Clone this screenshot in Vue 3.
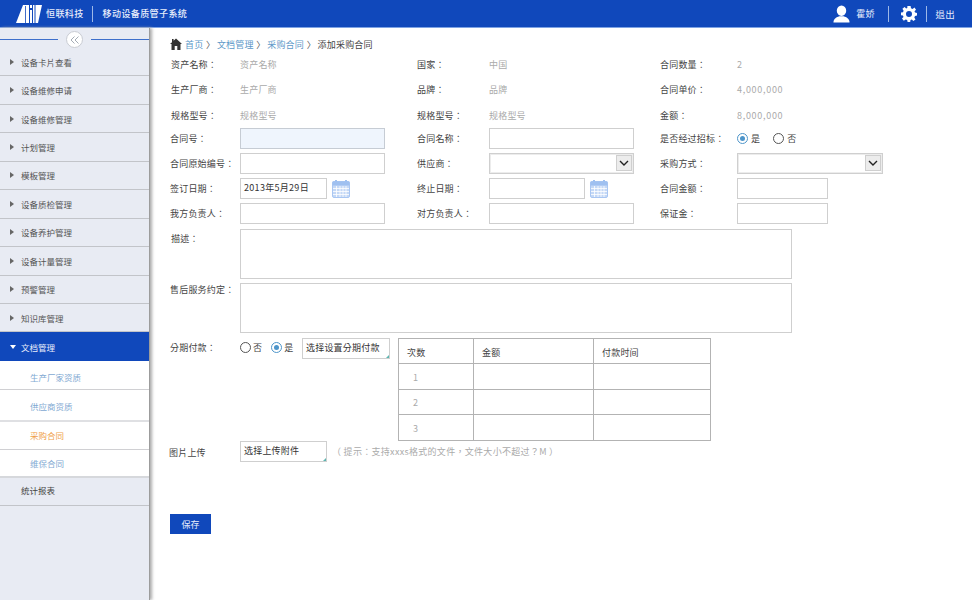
<script setup>
const menuTop = ['设备卡片查看','设备维修申请','设备维修管理','计划管理','模板管理','设备质检管理','设备养护管理','设备计量管理','预警管理','知识库管理']
const subs = [
  { t: '生产厂家资质', c: 'sub s1' },
  { t: '供应商资质', c: 'sub s2' },
  { t: '采购合同', c: 'sub s3 cur' },
  { t: '维保合同', c: 'sub s4' }
]
const infos = [
  ['资产名称：','资产名称','国家：','中国','合同数量：','2'],
  ['生产厂商：','生产厂商','品牌：','品牌','合同单价：','4,000,000'],
  ['规格型号：','规格型号','规格型号：','规格型号','金额：','8,000,000']
]
</script>

<template>
  <div class="page">
    <header class="top">
      <svg class="logo" width="26" height="18" viewBox="0 0 26 18">
        <path d="M7 0H13V18H0Z" fill="#fff"/>
        <path d="M9.500 1V18" stroke="#1048bb" stroke-width="0.800"/>
        <rect x="14" y="0" width="2" height="3" fill="#fff"/>
        <rect x="14" y="5" width="2" height="13" fill="#fff"/>
        <rect x="17" y="0" width="1.500" height="18" fill="#fff"/>
        <path d="M19.500 0H26L22 18H19.500Z" fill="#fff"/>
      </svg>
      <span class="brand">恒联科技</span>
      <i class="sep"></i>
      <span class="brand">移动设备质管子系统</span>
      <div class="grow"></div>
      <svg class="user" width="17" height="18" viewBox="0 0 18 18">
        <ellipse cx="9" cy="5.500" rx="5" ry="5.500" fill="#fff"/>
        <path d="M0.500 18C0.500 14 4 12.500 6.500 11.500H11.500C14 12.500 17.500 14 17.500 18Z" fill="#fff"/>
      </svg>
      <span class="uname">霍娇</span>
      <i class="sep sp2"></i>
      <svg class="gear" width="16" height="16" viewBox="0 0 16 16">
        <path fill="#fff" fill-rule="evenodd" d="M6.400 0H9.600L10 2.200 11.600 2.900 13.500 1.600 15 3.700 13.500 5.200 14.100 6.600 16 6.900V9.600L14 10 13.300 11.600 14.500 13.400 12.300 15.100 10.900 13.500 9.500 14.100 9.200 16H6.600L6.200 14 4.700 13.400 2.800 14.700 1 12.600 2.500 11 1.900 9.500 0 9.200V6.600L2 6.200 2.600 4.700 1.400 2.800 3.600 1 5.100 2.500 6.300 2Z M8 5A3 3 0 1 0 8 11 3 3 0 1 0 8 5Z"/>
      </svg>
      <i class="sep sp3"></i>
      <span class="exit">退出</span>
    </header>

    <div class="body">
      <aside class="side">
        <div class="collapse">
          <i class="cl"></i>
          <span class="cbtn">
            <svg width="10" height="8" viewBox="0 0 10 8"><path d="M4.500 0.500L1 4L4.500 7.500M8.500 0.500L5 4L8.500 7.500" fill="none" stroke="#9aa3ad" stroke-width="0.900"/></svg>
          </span>
          <i class="cl"></i>
        </div>
        <div v-for="m in menuTop" :key="m" class="mi"><b class="tri"></b>{{ m }}</div>
        <div class="mi active"><b class="tri down"></b>文档管理</div>
        <div v-for="s in subs" :key="s.t" :class="s.c">{{ s.t }}</div>
        <div class="mi plain">统计报表</div>
      </aside>

      <main class="main">
        <div class="crumb">
          <svg class="home" width="12" height="12" viewBox="0 0 12 12">
            <path fill="#333" d="M6 0.500L12 6H10.500V12H7.300V8H4.700V12H1.500V6H0L2 4.200V1H3.600V2.700Z"/>
          </svg>
          <a>首页</a><em>〉</em><a>文档管理</a><em>〉</em><a>采购合同</a><em>〉</em><span>添加采购合同</span>
        </div>

        <div class="grid">
          <template v-for="r in infos" :key="r[1] + r[0]">
            <div class="row info">
              <label class="l1">{{ r[0] }}</label><span class="v1">{{ r[1] }}</span>
              <label class="l2">{{ r[2] }}</label><span class="v2">{{ r[3] }}</span>
              <label class="l3">{{ r[4] }}</label><span class="v3">{{ r[5] }}</span>
            </div>
          </template>

          <div class="row ctl first">
            <label class="l1">合同号：</label><div class="in w1 focus"></div>
            <label class="l2">合同名称：</label><div class="in w2"></div>
            <label class="l3">是否经过招标：</label>
            <div class="radios">
              <span class="radio on"></span><span class="rt">是</span>
              <span class="radio gap"></span><span class="rt">否</span>
            </div>
          </div>
          <div class="row ctl">
            <label class="l1">合同原始编号：</label><div class="in w1"></div>
            <label class="l2">供应商：</label>
            <div class="in w2 sel"><span class="arrow"><svg width="10" height="6" viewBox="0 0 10 6"><path d="M1 1L5 5L9 1" fill="none" stroke="#222" stroke-width="1.400"/></svg></span></div>
            <label class="l3">采购方式：</label>
            <div class="in w3 sel"><span class="arrow"><svg width="10" height="6" viewBox="0 0 10 6"><path d="M1 1L5 5L9 1" fill="none" stroke="#222" stroke-width="1.400"/></svg></span></div>
          </div>
          <div class="row ctl">
            <label class="l1">签订日期：</label>
            <div class="datecell"><div class="in date">2013年5月29日</div>
              <svg class="cal" width="18" height="18" viewBox="0 0 18 18"><rect x="0.500" y="1.500" width="17" height="16" rx="1.500" fill="#c4d8f6" stroke="#a9c6f2"/><rect x="0.500" y="1.500" width="17" height="4" fill="#9fc0f0"/><path d="M4 0V3M14 0V3" stroke="#9fc0f0" stroke-width="2"/><path d="M1 8.500H17M1 11.500H17M1 14.500H17M4.500 6V17M8 6V17M11 6V17M14 6V17" stroke="#fff" stroke-width="0.800"/></svg>
            </div>
            <label class="l2">终止日期：</label>
            <div class="datecell"><div class="in date2"></div>
              <svg class="cal" width="18" height="18" viewBox="0 0 18 18"><rect x="0.500" y="1.500" width="17" height="16" rx="1.500" fill="#c4d8f6" stroke="#a9c6f2"/><rect x="0.500" y="1.500" width="17" height="4" fill="#9fc0f0"/><path d="M4 0V3M14 0V3" stroke="#9fc0f0" stroke-width="2"/><path d="M1 8.500H17M1 11.500H17M1 14.500H17M4.500 6V17M8 6V17M11 6V17M14 6V17" stroke="#fff" stroke-width="0.800"/></svg>
            </div>
            <label class="l3">合同金额：</label><div class="in w4"></div>
          </div>
          <div class="row ctl">
            <label class="l1">我方负责人：</label><div class="in w1"></div>
            <label class="l2">对方负责人：</label><div class="in w2"></div>
            <label class="l3">保证金：</label><div class="in w4"></div>
          </div>
        </div>

        <div class="area-row a1"><label class="l1">描述：</label><div class="area"></div></div>
        <div class="area-row a2"><label class="l1">售后服务约定：</label><div class="area"></div></div>

        <div class="install">
          <label class="l1 lab">分期付款：</label>
          <div class="radios r2">
            <span class="radio"></span><span class="rt">否</span>
            <span class="radio on gap2"></span><span class="rt">是</span>
          </div>
          <div class="pick p1">选择设置分期付款</div>
          <table class="tbl">
            <tbody>
              <tr class="h"><td class="c1">次数</td><td class="c2">金额</td><td class="c3">付款时间</td></tr>
              <tr><td class="c1 n">1</td><td></td><td></td></tr>
              <tr><td class="c1 n">2</td><td></td><td></td></tr>
              <tr><td class="c1 n">3</td><td></td><td></td></tr>
            </tbody>
          </table>
        </div>

        <div class="upload">
          <label class="lu">图片上传</label>
          <div class="pick p2">选择上传附件</div>
          <span class="hint">（ 提示：支持xxxs格式的文件，文件大小不超过？M ）</span>
        </div>

        <button class="save">保存</button>
      </main>
    </div>
  </div>
</template>

<style>
html, body { margin: 0; background: #fff; }
</style>

<style scoped>
.page { width: 972px; height: 600px; overflow: hidden; font-family: "Noto Sans CJK TC", "Liberation Sans", sans-serif; font-size: 9px; color: #444; letter-spacing: 0.2px; }
.top { height: 27px; background: #1048bb; border-bottom: 1px solid #7ea3e4; display: flex; align-items: center; color: #e8eefb; padding-left: 16px; padding-right: 17px; }
.logo { margin-right: 4px; flex: none; }
.brand { font-size: 9px; letter-spacing: 0.4px; white-space: nowrap; font-weight: 500; }
.sep { width: 1px; height: 16px; background: #9db8e8; margin: 0 10px 0 8px; flex: none; }
.grow { flex: 1; }
.user { margin-right: 6px; }
.uname { font-size: 9px; }
.sep.sp2 { margin: 0 12px 0 13px; }
.gear { flex: none; margin-top: 1px; }
.sep.sp3 { margin: 0 9px 0 9px; }
.exit { font-size: 9.500px; }

.body { display: flex; height: 572px; }
.side { width: 150px; height: 572px; flex: none; background: #e8ebf3; border-right: 1px solid #9c9c9c; box-shadow: 2px 0 3px #aaa; box-sizing: border-box; font-size: 8.500px; letter-spacing: 0; }
.collapse { height: 20px; padding-top: 3px; box-sizing: border-box; display: flex; align-items: center; justify-content: space-between; }
.cl { display: block; width: 58px; height: 1px; background: #3d6fcb; }
.cbtn { width: 15px; height: 15px; border-radius: 50%; background: #fff; border: 1px solid #c9ccd3; display: flex; align-items: center; justify-content: center; }
.mi { height: 28.450px; box-sizing: border-box; border-bottom: 1px solid #c2c4c9; display: flex; align-items: center; padding-left: 10px; color: #555; }
.tri { width: 0; height: 0; border-left: 4px solid #666; border-top: 3.500px solid transparent; border-bottom: 3.500px solid transparent; margin-right: 7px; }
.tri.down { border-top: 4px solid #fff; border-bottom: 0; border-left: 3.500px solid transparent; border-right: 3.500px solid transparent; margin-right: 5px; }
.mi.active { background: #1048bb; color: #e8eefb; border-bottom: 0; }
.sub { height: 28.500px; background: #fff; box-sizing: border-box; padding-left: 30px; display: flex; align-items: center; color: #7fa9d2; border-bottom: 1px solid #d0d0d3; }
.s1 { height: 29px; padding-top: 5px; }
.s2 { height: 32px; border-bottom: 2px solid #dfe0e3; padding-top: 2px; }
.s3 { padding-bottom: 2px; }
.s4 { height: 28px; border-bottom: 2px solid #d6d8dc; padding-bottom: 1px; }
.sub.cur { color: #ef9f4c; }
.mi.plain { padding-left: 21px; padding-bottom: 3px; height: 28px; color: #444; }

.main { flex: 1; padding-left: 20px; box-sizing: border-box; }
.crumb { display: flex; align-items: center; height: 23.500px; box-sizing: border-box; padding-top: 9px; color: #444; }
.home { margin-right: 3px; }
.crumb a { color: #5d98c8; }
.crumb em { font-style: normal; color: #555; width: 13.500px; box-sizing: border-box; padding-left: 1px; text-align: center; }
.grid { display: flex; flex-direction: column; }
.row { display: grid; grid-template-columns: 70px 177px 72px 171px 77px 160px; align-items: center; }
.row.info { height: 25.500px; }
.row.ctl { height: 25px; }
.first { margin-top: -2px; }
label { color: #444; white-space: nowrap; }
.info .l1 { padding-left: 1px; }
.v1, .v2, .v3 { color: #aaa; }
.v3 { letter-spacing: 0.700px; }
.in { height: 21px; box-sizing: border-box; background: #fff; border: 1px solid #cfcfcf; position: relative; }
.w1 { width: 145px; }
.w2 { width: 145px; }
.w3 { width: 146px; }
.w4 { width: 91px; }
.focus { background: #eff5fd; border-color: #c6ccd4; }
.sel { box-shadow: inset 0 0 0 1px #ececec; }
.arrow { position: absolute; right: 1px; top: 1px; width: 16px; height: 16px; background: #ececec; border: 1px solid #cfcfcf; box-sizing: border-box; display: flex; align-items: center; justify-content: center; }
.datecell { display: flex; align-items: center; }
.date { width: 87px; padding-left: 3px; line-height: 18px; color: #333; letter-spacing: 0.300px; white-space: nowrap; }
.date2 { width: 96px; }
.cal { margin-left: 5px; flex: none; }
.radios { display: flex; align-items: center; }
.radio { width: 9px; height: 9px; border: 1px solid #555; border-radius: 50%; background: #fff; position: relative; flex: none; }
.radio.on { border-color: #4d95ca; }
.radio.on::after { content: ""; position: absolute; left: 2px; top: 2px; width: 5px; height: 5px; border-radius: 50%; background: #4d95ca; }
.rt { margin-left: 3px; color: #444; }
.gap { margin-left: 13px; }

.area-row { display: grid; grid-template-columns: 70px 552px; margin-top: 3px; }
.area-row.a2 { margin-top: 4px; }
.area-row label { padding-left: 1px; padding-top: 1px; line-height: 18px; }
.area-row.a2 label { padding-left: 0; padding-top: 0; margin-top: -2px; }
.area { height: 50px; box-sizing: border-box; border: 1px solid #cfcfcf; background: #fff; }

.install { display: flex; align-items: flex-start; margin-top: 5px; height: 103px; }
.lab { width: 70px; line-height: 20px; flex: none; }
.r2 { height: 18px; width: 62px; flex: none; }
.r2 .rt { margin-left: 2px; }
.gap2 { margin-left: 9px; }
.pick { height: 21px; box-sizing: border-box; border: 1px solid #cfcfcf; background: #fff; line-height: 18px; padding-left: 3px; position: relative; color: #333; white-space: nowrap; }
.pick::after { content: ""; position: absolute; right: 0; bottom: 0; border-left: 3px solid transparent; border-bottom: 3px solid #5bb5b0; }
.p1 { width: 88px; }
.tbl { margin-left: 8px; width: 313px; height: 103px; border-collapse: collapse; table-layout: fixed; border: 1px solid #a9a9a9; flex: none; }
.tbl td { border: 1px solid #b3b3b3; padding: 2px 0 0 8px; color: #444; box-sizing: border-box; }
.tbl .c1 { width: 75px; }
.tbl .c2 { width: 120px; }
.tbl .h td { height: 25px; }
.tbl td.n { color: #aaa; padding-left: 14px; }
.upload { display: flex; align-items: center; height: 21px; }
.lu { width: 70px; flex: none; margin-left: -1px; margin-right: 1px; padding-top: 2px; }
.p2 { width: 87px; }
.hint { margin-left: 5px; color: #aaa; letter-spacing: 0.300px; }
.save { display: block; margin-top: 52px; width: 41px; height: 20px; padding: 0; border: 0; background: #1048bb; color: #e8eefb; font: inherit; letter-spacing: 0; }
</style>
